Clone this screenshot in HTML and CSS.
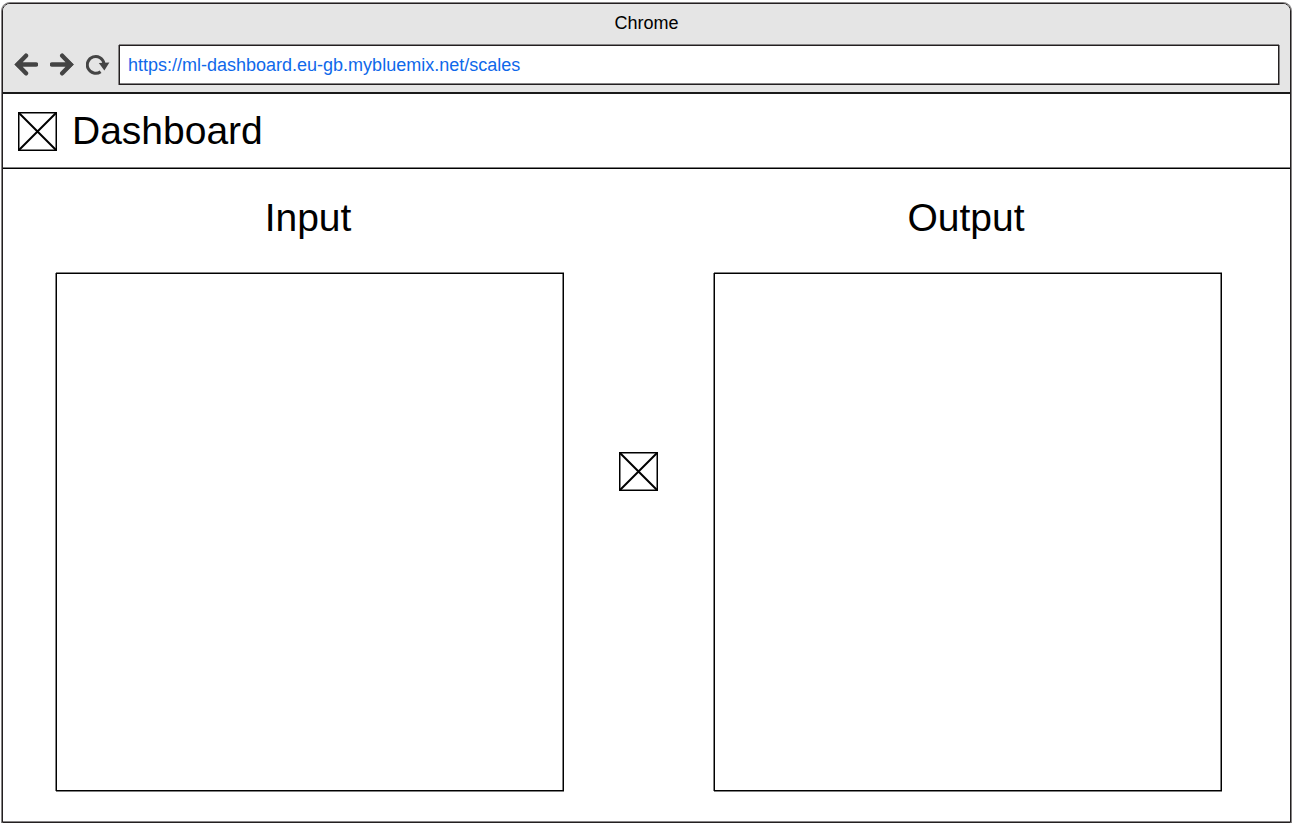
FILE: index.html
```html
<!DOCTYPE html>
<html lang="en">
<head>
<meta charset="utf-8">
<title>Dashboard</title>
<link rel="stylesheet" href="styles.css">
</head>
<body>
<div class="window">
  <div class="chrome">
    <div class="window-title">Chrome</div>
    <div class="toolbar">
      <button class="nav-button" type="button" aria-label="Back">
        <svg viewBox="0 0 24 24" width="24" height="24"><path d="M22 11.500H6M12 2.700L3.500 11.500L12 20.300" fill="none" stroke="#444" stroke-width="4.400" stroke-linecap="round"/><path d="M0.500 11.500L7 5.500V17.500Z" fill="#444"/></svg>
      </button>
      <button class="nav-button" type="button" aria-label="Forward">
        <svg viewBox="0 0 24 24" width="24" height="24"><path d="M2 11.500H18M12.200 2.700L20.700 11.500L12.200 20.300" fill="none" stroke="#444" stroke-width="4.400" stroke-linecap="round"/><path d="M23.700 11.500L17.200 5.500V17.500Z" fill="#444"/></svg>
      </button>
      <button class="nav-button" type="button" aria-label="Reload">
        <svg viewBox="0 0 24 24" width="24" height="24"><path d="M14.600 18.700A8.400 8.400 0 1 1 18 10.500" fill="none" stroke="#444" stroke-width="3"/><path d="M12.800 10L23.400 9.400L18.400 17.500Z" fill="#444"/></svg>
      </button>
      <input class="address" type="text" aria-label="Address" value="https://ml-dashboard.eu-gb.mybluemix.net/scales">
    </div>
  </div>
  <header class="app-header">
    <svg class="placeholder" viewBox="0 0 39 39" width="39" height="39" role="img" aria-label="Logo"><rect x="0.750" y="0.750" width="37.500" height="37.500" fill="none" stroke="#000" stroke-width="1.500"/><path d="M1 1L38 38M38 1L1 38" stroke="#000" stroke-width="2"/></svg>
    <h1 class="heading">Dashboard</h1>
  </header>
  <main class="converter">
    <section class="column">
      <h2 class="heading column-heading">Input</h2>
      <div class="panel"></div>
    </section>
    <div class="divider">
      <svg class="placeholder" viewBox="0 0 39 39" width="39" height="39" role="img" aria-label="Convert"><rect x="0.750" y="0.750" width="37.500" height="37.500" fill="none" stroke="#000" stroke-width="1.500"/><path d="M1 1L38 38M38 1L1 38" stroke="#000" stroke-width="2"/></svg>
    </div>
    <section class="column">
      <h2 class="heading column-heading">Output</h2>
      <div class="panel"></div>
    </section>
  </main>
</div>
</body>
</html>
```
FILE: styles.css
```css
* {
  box-sizing: border-box;
}

body {
  display: flex;
  min-height: 100vh;
  margin: 0;
  padding: 3px 3px 3px 2px;
  background: #fff;
  color: #000;
  font-family: "Liberation Sans", Arial, sans-serif;
}

.window {
  display: flex;
  flex: 1;
  flex-direction: column;
  border: 1px solid #231f20;
  border-radius: 8px 8px 0 0;
  box-shadow: -1px 0 #858384, 1px 0 #858384, 0 -1px #858384, inset 0 -1px #858384;
}

.chrome {
  padding: 9px 11px 7px;
  border-bottom: 2px solid #1a1a1a;
  border-radius: 7px 7px 0 0;
  background: #e5e5e5;
}

.window-title {
  margin-bottom: 11px;
  font-size: 18px;
  line-height: 21px;
  text-align: center;
}

.toolbar {
  display: flex;
  align-items: center;
  gap: 12px;
}

.nav-button {
  flex: none;
  width: 24px;
  height: 24px;
  padding: 0;
  border: 0;
  background: none;
}

.nav-button svg,
.placeholder {
  display: block;
}

.address {
  flex: 1;
  min-width: 0;
  height: 40px;
  margin-left: -3px;
  padding: 0 8px;
  border: 1px solid #231f20;
  border-radius: 0;
  box-shadow: 0 -1px #858384, 1px 0 #858384, -1px 0 #858384, inset 0 -1px #858384;
  background: #fff;
  color: #0f68ea;
  font-family: inherit;
  font-size: 18px;
}

.app-header {
  display: flex;
  align-items: center;
  gap: 15px;
  padding: 14px 15px;
  border-bottom: 1px solid #000;
  box-shadow: inset 0 -1px #808080;
}

.heading {
  margin: 0;
  font-size: 39px;
  font-weight: 400;
  line-height: 46px;
}

.converter {
  display: grid;
  flex: 1;
  grid-template-columns: 1fr 150px 1fr;
  padding: 26px 68px 31px 53px;
}

.column {
  display: flex;
  flex-direction: column;
}

.column-heading {
  margin-bottom: 32px;
  padding-right: 4px;
  text-align: center;
}

.panel {
  flex: 1;
  border: 1px solid #000;
  box-shadow: 0 1px #808080, 0 -1px #808080, -1px 0 #808080, inset -1px 0 #808080;
}

.divider {
  display: flex;
  align-items: center;
  justify-content: center;
  padding: 0 1px 44px 0;
}
```
